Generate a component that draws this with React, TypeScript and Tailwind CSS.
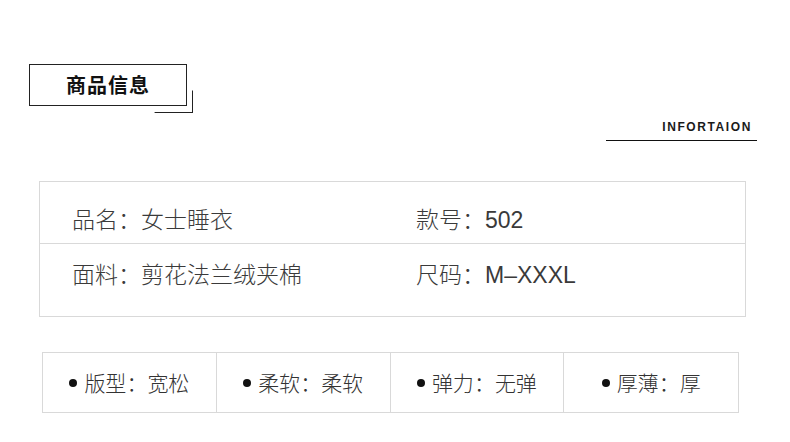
const specs = [
  { label: "版型", value: "宽松" },
  { label: "柔软", value: "柔软" },
  { label: "弹力", value: "无弹" },
  { label: "厚薄", value: "厚" },
];

function SpecCell({ label, value, last }: { label: string; value: string; last?: boolean }) {
  return (
    <div className={`flex items-center justify-center gap-[7px] ${last ? "" : "border-r border-[#d9d9d9]"}`}>
      <span className="w-[8px] h-[8px] rounded-full bg-[#111]" />
      <span>
        {label}：{value}
      </span>
    </div>
  );
}

export default function App() {
  return (
    <div className="w-[790px] h-[442px] bg-white overflow-hidden text-[#333] font-['Noto_Sans_CJK_SC','Noto_Sans',sans-serif]">
      <div className="pt-[64px] pl-[29px]">
        <div className="relative w-[158px] h-[42px]">
          <div className="absolute left-[4px] top-[4px] w-[160px] h-[45px] border-r-[1.5px] border-b-[1.5px] border-[#222] [clip-path:polygon(76%_50%,100%_50%,100%_100%,76%_100%)]" />
          <div className="relative w-full h-full border-[1.5px] border-[#222] bg-white flex items-center justify-center text-[20px] font-bold text-[#111] tracking-[1px]">
            商品信息
          </div>
        </div>
      </div>

      <div className="ml-[606px] w-[151px] mt-[12px] border-b border-[#111] pb-[5px] pr-[5px] text-right text-[12px] leading-[16px]">
        <span className="font-['Liberation_Sans',sans-serif] font-semibold tracking-[1.6px] text-[#1a1a1a]">
          INFORTAION
        </span>
      </div>

      <div className="ml-[39px] mt-[40px] w-[707px] border border-[#d9d9d9] text-[23px] font-light text-[#3a3a3a]">
        <div className="grid grid-cols-[344px_1fr] h-[62px] items-start pt-[21px] leading-[30px] border-b border-[#d9d9d9] pl-[32px]">
          <div>品名：女士睡衣</div>
          <div>
            款号：<span className="font-['Liberation_Sans',sans-serif] font-normal">502</span>
          </div>
        </div>
        <div className="grid grid-cols-[344px_1fr] h-[72px] items-start pt-[14px] leading-[30px] pl-[32px]">
          <div>面料：剪花法兰绒夹棉</div>
          <div>
            尺码：<span className="font-['Liberation_Sans',sans-serif] font-normal">M–XXXL</span>
          </div>
        </div>
      </div>

      <div className="ml-[42px] mt-[35px] w-[697px] h-[61px] border border-[#d9d9d9] grid grid-cols-4 text-[21px] font-light text-[#333]">
        {specs.map((s, i) => (
          <SpecCell key={s.label} label={s.label} value={s.value} last={i === specs.length - 1} />
        ))}
      </div>
    </div>
  );
}
